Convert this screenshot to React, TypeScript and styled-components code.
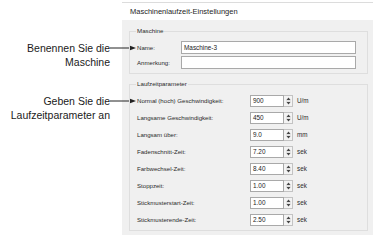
import React from 'react';
import styled, { createGlobalStyle } from 'styled-components';

const GlobalStyle = createGlobalStyle`
  html, body {
    margin: 0;
    padding: 0;
    background: #ffffff;
  }
  * {
    box-sizing: border-box;
  }
`;

const Page = styled.div`
  display: flex;
  width: 386px;
  height: 242px;
  background: #ffffff;
  overflow: hidden;
`;

const CalloutColumn = styled.div`
  width: 122px;
  flex-shrink: 0;
  display: flex;
  flex-direction: column;
  padding-top: 41px;
  gap: 25px;
`;

const Callout = styled.div`
  position: relative;
  padding-right: 12px;
  text-align: right;
  font-family: "Liberation Sans", Arial, sans-serif;
  font-size: 10.5px;
  line-height: 14px;
  color: #1a1a1a;
`;

const Arrow = styled.svg`
  position: absolute;
  left: 110px;
  top: 4px;
  overflow: visible;
`;

const Dialog = styled.div`
  width: 251px;
  flex-shrink: 0;
  display: flex;
  flex-direction: column;
  font-family: "Liberation Sans", Tahoma, sans-serif;
  color: #2b2b2b;
`;

const Header = styled.div`
  margin-top: 2px;
  height: 18px;
  border-top: 1px solid #dcdcdc;
  padding-left: 8px;
  font-size: 7.5px;
  line-height: 17px;
  color: #1e1e1e;
`;

const Body = styled.div`
  background: #f0f0f0;
  padding: 11px 5px 4px 7px;
  display: flex;
  flex-direction: column;
  gap: 10px;
`;

const GroupBox = styled.div<{ $pad: string }>`
  position: relative;
  border: 1px solid #dedede;
  padding: ${({ $pad }) => $pad};
`;

const GroupTitle = styled.span`
  position: absolute;
  top: -5px;
  left: 6px;
  padding: 0 1px;
  background: #f0f0f0;
  font-size: 6.2px;
  line-height: 8px;
  color: #2b2b2b;
`;

const NameGrid = styled.div`
  display: grid;
  grid-template-columns: 44px 1fr;
  row-gap: 2px;
  align-items: center;
`;

const ParamGrid = styled.div`
  display: grid;
  grid-template-columns: 113px 34px 9px 1fr;
  row-gap: 5px;
  align-items: center;
`;

const Label = styled.span`
  font-size: 6.1px;
  line-height: 8px;
  white-space: nowrap;
  color: #2b2b2b;
`;

const TextBox = styled.div<{ $h: number }>`
  height: ${({ $h }) => $h}px;
  background: #ffffff;
  border: 1px solid #a9a9a9;
  padding-left: 2px;
  font-size: 6.4px;
  line-height: ${({ $h }) => $h - 2}px;
  color: #222;
  white-space: nowrap;
`;

const Spinner = styled.div`
  height: 12px;
  border: 1px solid #c3c3c3;
  border-left: none;
  background: #f3f3f3;
  display: flex;
  align-items: center;
  justify-content: center;
`;

const Unit = styled.span`
  padding-left: 4px;
  font-size: 6.3px;
  line-height: 8px;
  color: #2b2b2b;
`;

const SpinIcon = () => (
  <svg width="5" height="8" viewBox="0 0 5 8">
    <path d="M2.5 0.5 L4.5 3 L0.5 3 Z" fill="#444" />
    <line x1="0" y1="4" x2="5" y2="4" stroke="#bdbdbd" strokeWidth="0.6" />
    <path d="M0.5 5 L4.5 5 L2.5 7.5 Z" fill="#444" />
  </svg>
);

const ArrowIcon = () => (
  <Arrow width="26" height="6" viewBox="0 0 26 6">
    <line x1="0" y1="3" x2="22" y2="3" stroke="#222" strokeWidth="1" />
    <path d="M26 3 L20 0.8 L20 5.2 Z" fill="#222" />
  </Arrow>
);

const params = [
  { label: 'Normal (hoch) Geschwindigkeit:', value: '900', unit: 'U/m' },
  { label: 'Langsame Geschwindigkeit:', value: '450', unit: 'U/m' },
  { label: 'Langsam über:', value: '9.0', unit: 'mm' },
  { label: 'Fadenschnitt-Zeit:', value: '7.20', unit: 'sek' },
  { label: 'Farbwechsel-Zeit:', value: '8.40', unit: 'sek' },
  { label: 'Stoppzeit:', value: '1.00', unit: 'sek' },
  { label: 'Stickmusterstart-Zeit:', value: '1.00', unit: 'sek' },
  { label: 'Stickmusterende-Zeit:', value: '2.50', unit: 'sek' },
];

const App = (): JSX.Element => {
  return (
    <Page>
      <GlobalStyle />
      <CalloutColumn>
        <Callout>
          Benennen Sie die
          <br />
          Maschine
          <ArrowIcon />
        </Callout>
        <Callout>
          Geben Sie die
          <br />
          Laufzeitparameter an
          <ArrowIcon />
        </Callout>
      </CalloutColumn>
      <Dialog>
        <Header>Maschinenlaufzeit-Einstellungen</Header>
        <Body>
          <GroupBox $pad="9px 11px 4px 7px">
            <GroupTitle>Maschine</GroupTitle>
            <NameGrid>
              <Label>Name:</Label>
              <TextBox $h={13}>Maschine-3</TextBox>
              <Label>Anmerkung:</Label>
              <TextBox $h={13} />
            </NameGrid>
          </GroupBox>
          <GroupBox $pad="10px 11px 4px 7px">
            <GroupTitle>Laufzeitparameter</GroupTitle>
            <ParamGrid>
              {params.map((p) => (
                <React.Fragment key={p.label}>
                  <Label>{p.label}</Label>
                  <TextBox $h={12}>{p.value}</TextBox>
                  <Spinner>
                    <SpinIcon />
                  </Spinner>
                  <Unit>{p.unit}</Unit>
                </React.Fragment>
              ))}
            </ParamGrid>
          </GroupBox>
        </Body>
      </Dialog>
    </Page>
  );
};

export default App;
